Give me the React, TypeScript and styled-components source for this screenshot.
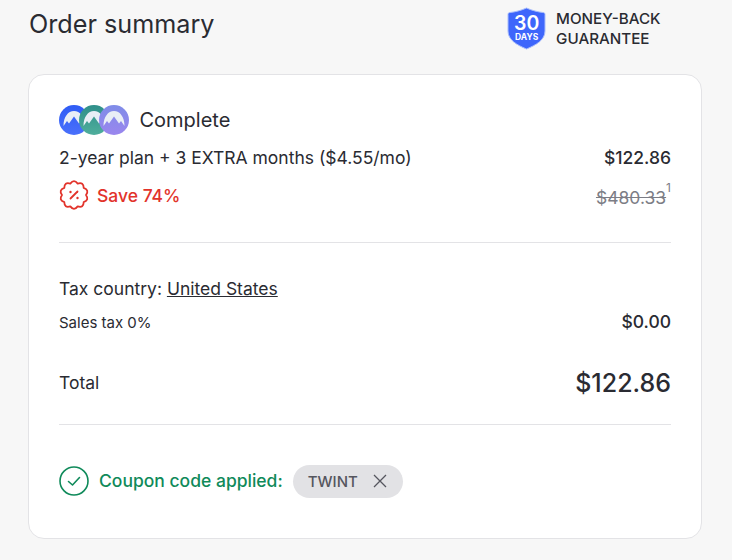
import React from 'react';
import styled, { createGlobalStyle } from 'styled-components';

const Global = createGlobalStyle`
  html, body {
    margin: 0;
    padding: 0;
    background: #f7f7f7;
    font-family: Inter, "Liberation Sans", sans-serif;
    color: #2a2b32;
  }
`;

const Page = styled.div`
  width: 732px;
  height: 560px;
  overflow: hidden;
  box-sizing: border-box;
  padding: 0 30px 0 28px;
`;

const TopBar = styled.div`
  height: 74px;
  display: flex;
  justify-content: space-between;
  align-items: flex-start;
`;

const Heading = styled.h1`
  margin: 8px 0 0 1px;
  font-size: 25.2px;
  line-height: 32px;
  font-weight: 400;
`;

const Guarantee = styled.div`
  display: flex;
  align-items: center;
  gap: 10px;
  margin: 7px 41.500px 0 0;
`;

const GuaranteeText = styled.div`
  font-size: 15.200px;
  line-height: 20px;
  font-weight: 500;
`;

const Badge = styled.div`
  position: relative;
  width: 39px;
  height: 43px;
  display: flex;
`;

const BadgeLabel = styled.div`
  position: absolute;
  inset: 8px 0 0;
  display: flex;
  flex-direction: column;
  align-items: center;
  color: #fff;
`;

const BadgeNumber = styled.span`
  font-size: 19.500px;
  line-height: 17px;
  font-weight: 600;
`;

const BadgeDays = styled.span`
  font-size: 8.500px;
  line-height: 9px;
  font-weight: 700;
  margin-top: 1px;
`;

const Card = styled.section`
  height: 465px;
  box-sizing: border-box;
  background: #fff;
  border: 1px solid #e3e3e6;
  border-radius: 16px;
  padding: 29px 30px 0;
`;

const PlanHead = styled.div`
  display: flex;
  align-items: center;
  gap: 10.500px;
  height: 32px;
  margin-bottom: 4px;
`;

const PlanName = styled.span`
  font-size: 20px;
  line-height: 28px;
`;

const Row = styled.div<{ $h: number; $top?: number }>`
  display: flex;
  justify-content: space-between;
  align-items: center;
  height: ${({ $h }) => $h}px;
  margin-top: ${({ $top }) => $top || 0}px;
`;

const Text = styled.span<{ $size?: number; $weight?: number; $lift?: number }>`
  font-size: ${({ $size }) => $size || 17.5}px;
  font-weight: ${({ $weight }) => $weight || 400};
  line-height: 24px;
  margin-bottom: ${({ $lift }) => $lift || 0}px;
`;

const Save = styled.div`
  display: flex;
  align-items: center;
  gap: 8px;
  color: #e2332b;
  font-size: 17.5px;
  font-weight: 500;
`;

const OldPriceWrap = styled.span`
  display: inline-flex;
  align-items: flex-start;
  color: #7c7d85;
  font-size: 17.5px;
  line-height: 24px;
  margin-top: 6px;
`;

const OldPrice = styled.span`
  text-decoration: line-through;
`;

const Sup = styled.span`
  font-size: 12px;
  line-height: 16px;
  margin-top: -6px;
`;

const Divider = styled.hr<{ $top: number; $bottom: number }>`
  border: 0;
  height: 1px;
  background: #e3e3e6;
  margin: ${({ $top }) => $top}px 0 ${({ $bottom }) => $bottom}px;
`;

const Link = styled.a`
  color: inherit;
  text-decoration: underline;
`;

const Coupon = styled.div`
  display: flex;
  align-items: center;
  height: 34px;
`;

const CouponText = styled.span`
  margin: 0 0 2px 10px;
  color: #0f8a5a;
  font-size: 17.5px;
  font-weight: 500;
`;

const Chip = styled.div`
  display: flex;
  align-items: center;
  gap: 15px;
  margin-left: 10px;
  height: 33px;
  padding: 0 16px 0 15px;
  border-radius: 17px;
  background: #e2e2e5;
  color: #55565e;
  font-size: 15px;
  font-weight: 500;
`;

const Logos = styled.div`
  display: flex;
  & > svg + svg {
    margin-left: -10px;
  }
`;

const Mountain = ({ id, from, to }: { id: string; from: string; to: string }) => (
  <svg width="30" height="30" viewBox="0 0 30 30">
    <defs>
      <linearGradient id={id} x1="0" y1="0" x2="0" y2="1">
        <stop offset="0" stopColor={from} />
        <stop offset="1" stopColor={to} />
      </linearGradient>
    </defs>
    <circle cx="15" cy="15" r="15" fill={`url(#${id})`} />
    <path d="M4.500 21C4.500 12 9 6 15 6s10.500 6 10.500 15L22 16l-2 2.500-5-7-5 7L8 16z" fill="#e9eef6" />
  </svg>
);

const ShieldBadge = () => (
  <Badge>
    <svg width="39" height="43" viewBox="0 0 39 43">
      <path
        d="M19.500 1C25 3.500 31 5 36 5.500c1.300.1 2 .8 2 2V24c0 9-9 14-18.500 18C10 38 1 33 1 24V7.500c0-1.200.7-1.900 2-2C8 5 14 3.500 19.500 1z"
        fill="#3e66fb"
        stroke="#a9bdfc"
        strokeWidth="1"
      />
    </svg>
    <BadgeLabel>
      <BadgeNumber>30</BadgeNumber>
      <BadgeDays>DAYS</BadgeDays>
    </BadgeLabel>
  </Badge>
);

// scalloped seal outline
const sealPath = (() => {
  const n = 10;
  const pts: string[] = [];
  const p = (a: number, r: number) => `${(15 + r * Math.cos(a)).toFixed(2)} ${(15 + r * Math.sin(a)).toFixed(2)}`;
  for (let i = 0; i < n; i++) {
    const a0 = (i / n) * Math.PI * 2;
    const a1 = ((i + 0.5) / n) * Math.PI * 2;
    const a2 = ((i + 1) / n) * Math.PI * 2;
    if (i === 0) pts.push(`M${p(a0, 12)}`);
    pts.push(`Q${p(a1, 16.4)} ${p(a2, 12)}`);
  }
  return pts.join(' ') + 'Z';
})();

const DiscountIcon = () => (
  <svg width="30" height="30" viewBox="0 0 30 30" fill="none" stroke="#e2332b" strokeWidth="1.8">
    <path d={sealPath} strokeLinejoin="round" />
    <path d="M18.500 11.500l-7 7" strokeLinecap="round" />
    <circle cx="11.500" cy="12" r="1.200" fill="#e2332b" stroke="none" />
    <circle cx="18.500" cy="18" r="1.200" fill="#e2332b" stroke="none" />
  </svg>
);

const CheckIcon = () => (
  <svg width="30" height="30" viewBox="0 0 30 30" fill="none" stroke="#0f8a5a" strokeWidth="1.6">
    <circle cx="15" cy="15" r="14" />
    <path d="M9.500 15.500l4 3.500 7-7.500" strokeLinecap="round" strokeLinejoin="round" />
  </svg>
);

const CloseIcon = () => (
  <svg width="14" height="14" viewBox="0 0 14 14" fill="none" stroke="#55565e" strokeWidth="1.3">
    <path d="M1 1l12 12M13 1L1 13" />
  </svg>
);

export default function App() {
  return (
    <Page>
      <Global />
      <TopBar>
        <Heading>Order summary</Heading>
        <Guarantee>
          <ShieldBadge />
          <GuaranteeText>
            MONEY-BACK
            <br />
            GUARANTEE
          </GuaranteeText>
        </Guarantee>
      </TopBar>
      <Card>
        <PlanHead>
          <Logos>
            <Mountain id="a" from="#2f5cf5" to="#4a70fb" />
            <Mountain id="b" from="#2f8f8a" to="#4fae9c" />
            <Mountain id="c" from="#7f8ce8" to="#9a86ee" />
          </Logos>
          <PlanName>Complete</PlanName>
        </PlanHead>
        <Row $h={36}>
          <Text>2-year plan + 3 EXTRA months ($4.55/mo)</Text>
          <Text $weight={500}>$122.86</Text>
        </Row>
        <Row $h={38}>
          <Save>
            <DiscountIcon />
            Save 74%
          </Save>
          <OldPriceWrap>
            <OldPrice>$480.33</OldPrice>
            <Sup>1</Sup>
          </OldPriceWrap>
        </Row>
        <Divider $top={28} $bottom={28} />
        <Row $h={36}>
          <Text>
            Tax country: <Link>United States</Link>
          </Text>
        </Row>
        <Row $h={32}>
          <Text $size={15}>Sales tax 0%</Text>
          <Text $weight={500} $lift={2}>$0.00</Text>
        </Row>
        <Row $h={60} $top={14}>
          <Text>Total</Text>
          <Text $size={25} $weight={500}>$122.86</Text>
        </Row>
        <Divider $top={11} $bottom={39} />
        <Coupon>
          <CheckIcon />
          <CouponText>Coupon code applied:</CouponText>
          <Chip>
            TWINT
            <CloseIcon />
          </Chip>
        </Coupon>
      </Card>
    </Page>
  );
}
